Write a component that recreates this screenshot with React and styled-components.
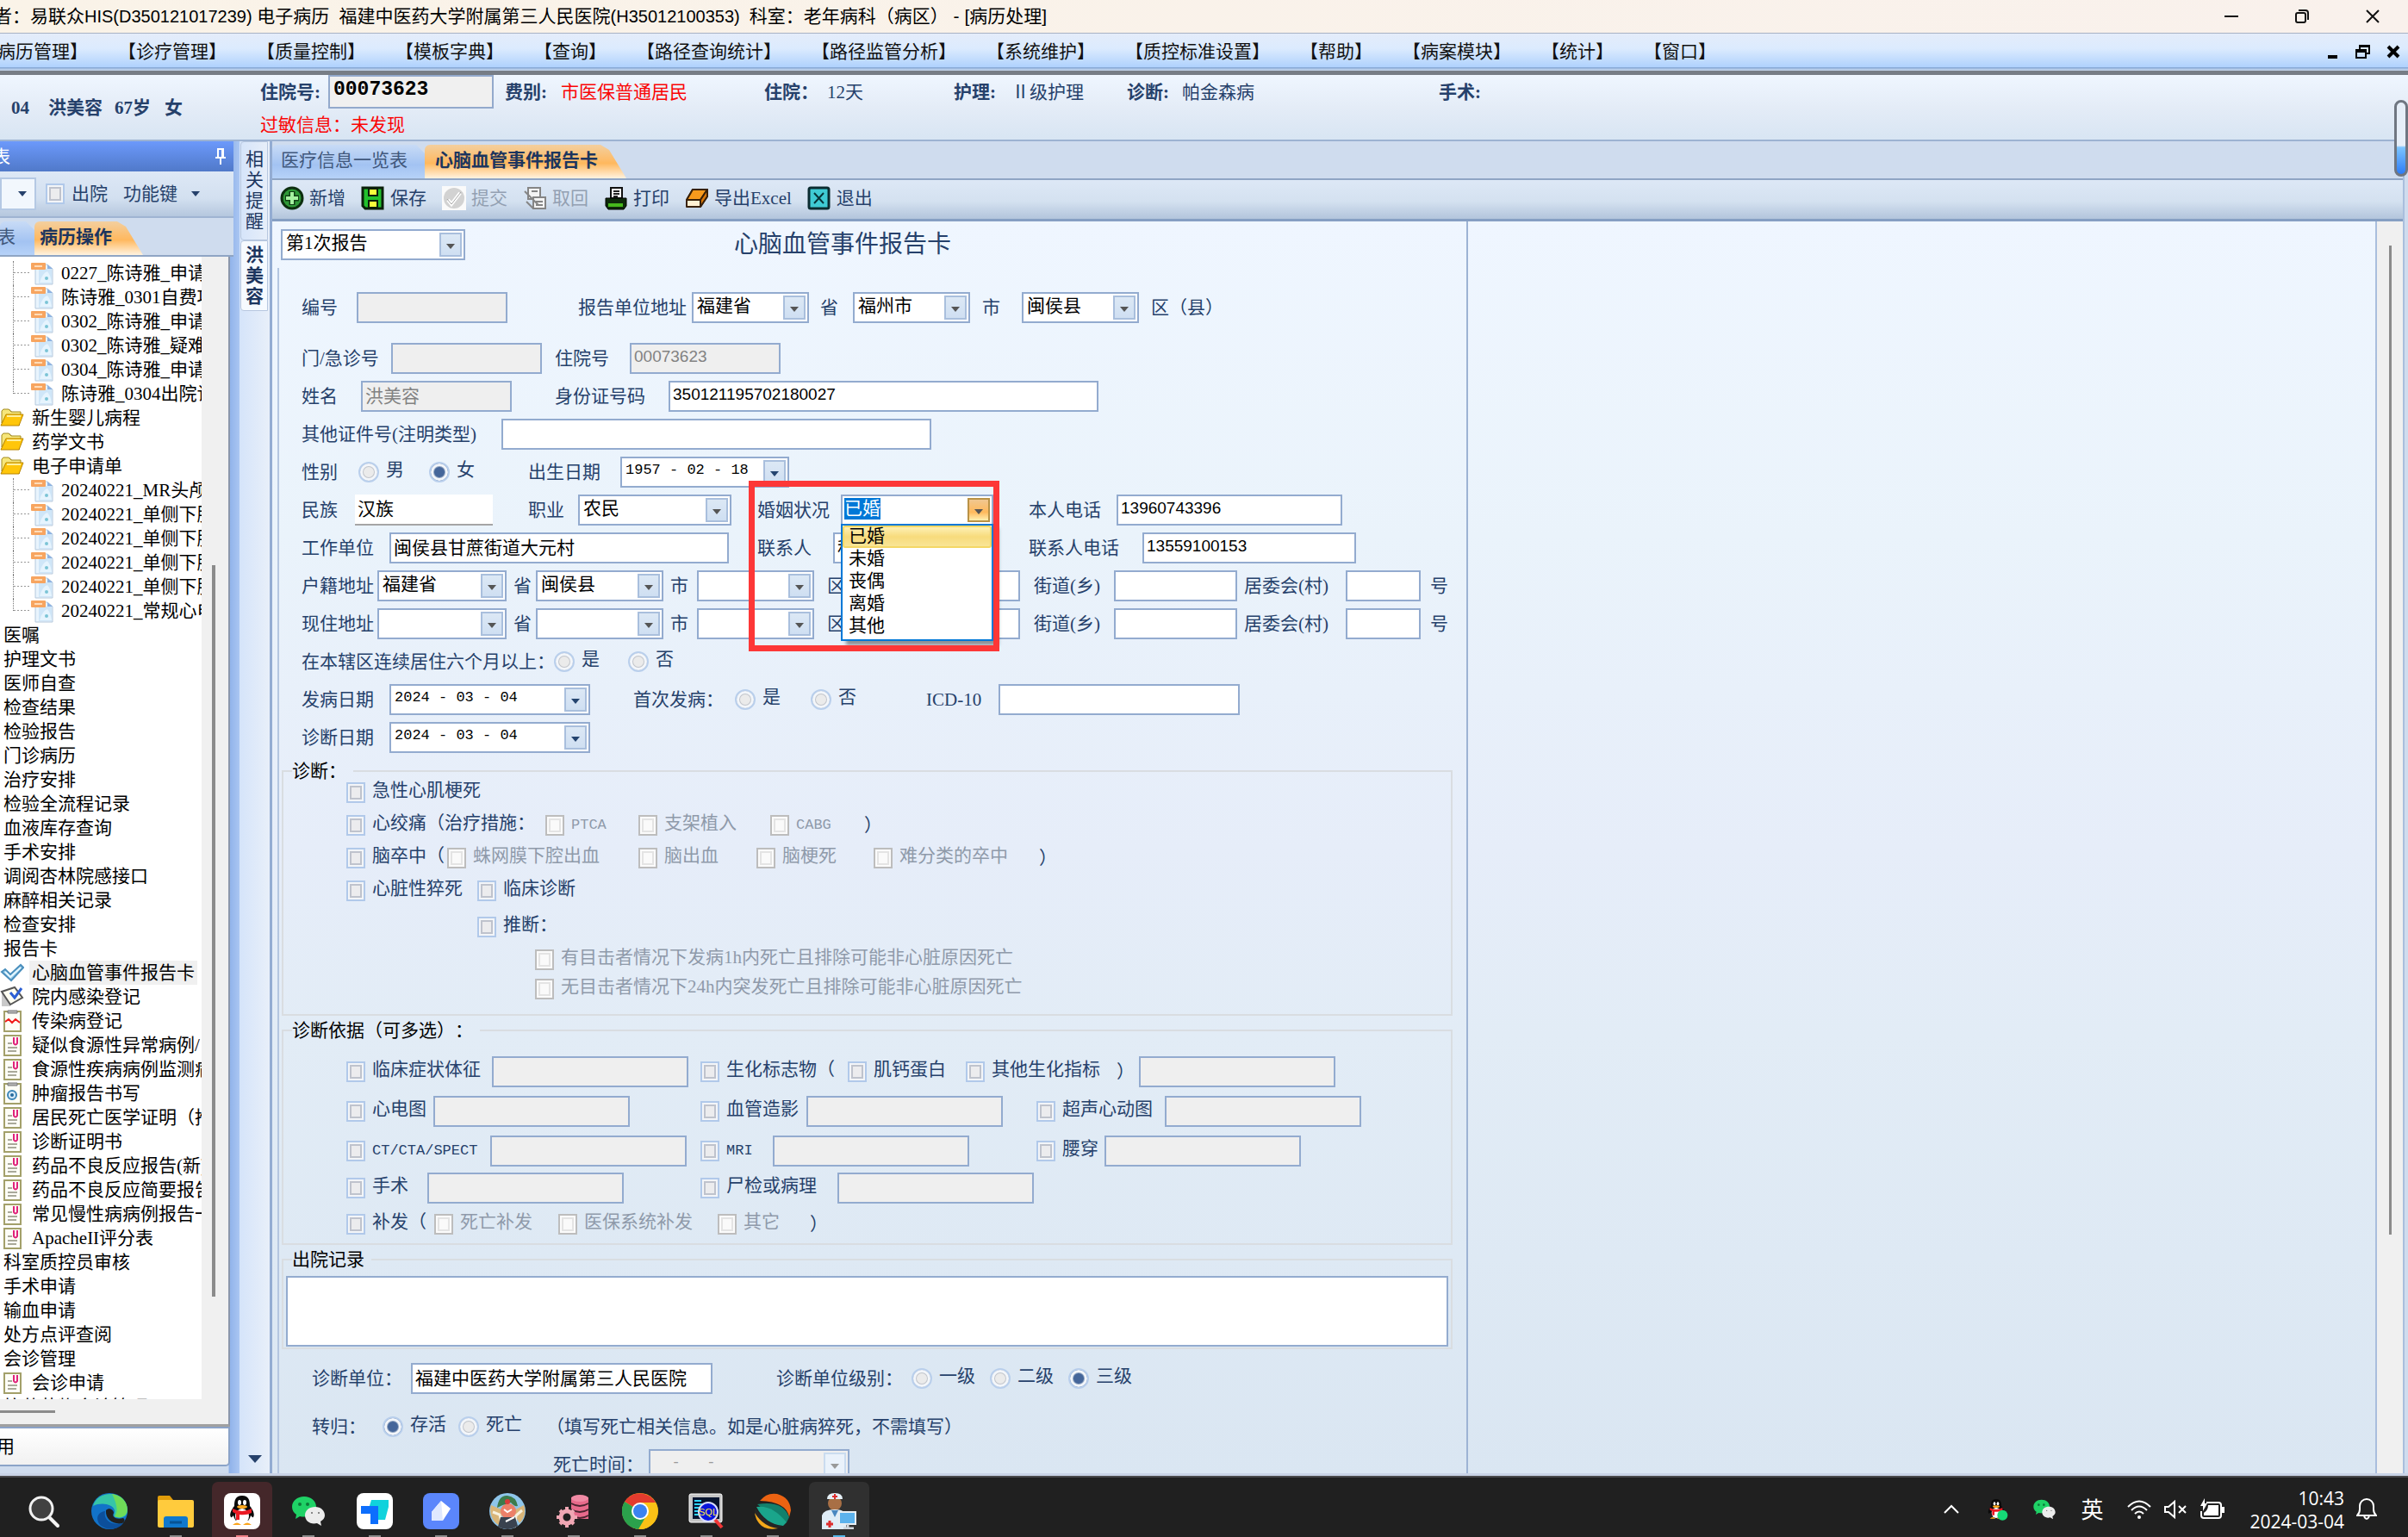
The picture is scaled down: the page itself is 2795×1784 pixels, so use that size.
import React from "react";
import styled, { createGlobalStyle, css } from "styled-components";

const TREE = [
  ["doc", "0227_陈诗雅_申请单"],
  ["doc", "陈诗雅_0301自费项目"],
  ["doc", "0302_陈诗雅_申请单"],
  ["doc", "0302_陈诗雅_疑难病例"],
  ["doc", "0304_陈诗雅_申请单"],
  ["docEnd", "陈诗雅_0304出院记录"],
  ["folder", "新生婴儿病程"],
  ["folder", "药学文书"],
  ["folder", "电子申请单"],
  ["doc", "20240221_MR头颅平扫"],
  ["doc", "20240221_单侧下肢"],
  ["doc", "20240221_单侧下肢"],
  ["doc", "20240221_单侧下肢"],
  ["doc", "20240221_单侧下肢"],
  ["docEnd", "20240221_常规心电图"],
  ["text", "医嘱"],
  ["text", "护理文书"],
  ["text", "医师自查"],
  ["text", "检查结果"],
  ["text", "检验报告"],
  ["text", "门诊病历"],
  ["text", "治疗安排"],
  ["text", "检验全流程记录"],
  ["text", "血液库存查询"],
  ["text", "手术安排"],
  ["text", "调阅杏林院感接口"],
  ["text", "麻醉相关记录"],
  ["text", "检查安排"],
  ["text", "报告卡"],
  ["check", "心脑血管事件报告卡"],
  ["note", "院内感染登记"],
  ["chart", "传染病登记"],
  ["clip", "疑似食源性异常病例/"],
  ["clip", "食源性疾病病例监测病"],
  ["scan", "肿瘤报告书写"],
  ["clip", "居民死亡医学证明（推"],
  ["clip", "诊断证明书"],
  ["clip", "药品不良反应报告(新)"],
  ["clip", "药品不良反应简要报告"],
  ["clip", "常见慢性病病例报告一"],
  ["clip", "ApacheII评分表"],
  ["text", "科室质控员审核"],
  ["text", "手术申请"],
  ["text", "输血申请"],
  ["text", "处方点评查阅"],
  ["text", "会诊管理"],
  ["clip", "会诊申请"],
  ["text", "抗菌药物会诊管理"],
];

const MENUS = [
  "【病历管理】", "【诊疗管理】", "【质量控制】", "【模板字典】", "【查询】", "【路径查询统计】", "【路径监管分析】",
  "【系统维护】", "【质控标准设置】", "【帮助】", "【病案模块】", "【统计】", "【窗口】",
];

const TOOLS = [
  ["add", "新增"],
  ["save", "保存"],
  ["submit", "提交", true],
  ["recall", "取回", true],
  ["print", "打印"],
  ["export", "导出Excel"],
  ["exit", "退出"],
];

const TreeIcon = ({ kind }) => {
  if (kind === "folder") {
    return (
      <svg width="28" height="26" viewBox="0 0 28 26">
        <path d="M3 22V5q0-2 2-2h6l3 3h9v16z" fill="#8f8752" />
        <path d="M2 19V5l2-2h6l3 3h11v5H8z" fill="#f6e67a" stroke="#a28a1c" />
        <path d="M1 22 7 9h20l-5 13z" fill="#ffc60a" stroke="#b98500" />
        <path d="M8 11h16" stroke="#fff0a0" strokeWidth="2" />
      </svg>
    );
  }
  if (kind === "doc" || kind === "docEnd") {
    return (
      <svg width="26" height="28" viewBox="0 0 26 28">
        <path d="M5 4h14l6 5v18H5z" fill="#e9f4fd" stroke="#b4c8dc" />
        <path d="M9 9h15v17H9z" fill="#cfe6f8" />
        <path d="M10 25q3-11 9-13 4 5 5 13z" fill="#e6f4fe" />
        <circle cx="18" cy="20" r="2" fill="#7cc4d6" />
        <path d="M19 4v5h6z" fill="#8db2e2" />
        <rect x="0" y="2" width="17" height="8" rx="1" fill="#f7a560" />
        <path d="M4 6h9" stroke="#ffdcb8" strokeWidth="2" />
      </svg>
    );
  }
  if (kind === "check") {
    return (
      <svg width="28" height="26" viewBox="0 0 28 26">
        <path d="m2 12 4-3 6 6L24 4l3 3-14 15z" fill="#9cd0ec" stroke="#4b8fbd" strokeWidth="2" />
        <path d="m6 12 6 6L24 7" fill="none" stroke="#e4f6ff" strokeWidth="2" />
      </svg>
    );
  }
  if (kind === "note") {
    return (
      <svg width="28" height="28" viewBox="0 0 28 28">
        <path d="M2 10h10v15H2z" fill="#c9c9c9" />
        <path d="m2 8 15-5 9 12-14 8z" fill="#fffef2" stroke="#555" strokeWidth="2" />
        <path d="m12 9 5 6 8-11" fill="none" stroke="#2c5fd4" strokeWidth="3" />
      </svg>
    );
  }
  return (
    <svg width="28" height="28" viewBox="0 0 28 28">
      <rect x="5" y="3" width="19" height="23" fill="#fdfdf6" stroke="#a3a06a" strokeWidth="2" />
      {kind === "clip" && <path d="M9 12h5M9 17h11M9 21h10" stroke="#a9a99a" strokeWidth="2" />}
      {kind === "clip" && <path d="M16 5v7q2 3 4 0V5" fill="none" stroke="#e0227b" strokeWidth="2" />}
      {kind !== "clip" && <path d="M9 5h11V2H9z" fill="#b5b5b5" stroke="#777" />}
      {kind === "chart" && <path d="m6 15 4-3 4 4 4-4 5 4" fill="none" stroke="#f01919" strokeWidth="2" />}
      {kind === "scan" && <circle cx="14" cy="16" r="5" fill="#d8ebf8" stroke="#3d86b8" strokeWidth="2" />}
      {kind === "scan" && <circle cx="14" cy="16" r="2" fill="#246a9c" />}
    </svg>
  );
};

const ToolIcon = ({ kind }) => (
  <svg width="28" height="28" viewBox="0 0 28 28">
    {kind === "add" && (
      <g>
        <circle cx="14" cy="14" r="12" fill="#2f9a38" stroke="#0d2f10" strokeWidth="3" />
        <path d="M14 6v16M6 14h16" stroke="#103d14" strokeWidth="7" />
        <path d="M14 7v14M7 14h14" stroke="#a5f2a0" strokeWidth="4" />
      </g>
    )}
    {kind === "save" && (
      <g>
        <path d="M2 2h23v24H5l-3-3z" fill="#22c02c" stroke="#0a1f0a" strokeWidth="3" />
        <path d="M9 3h10v8H9zM9 17h10v8H9z" fill="#f6ff3c" stroke="#0a1f0a" strokeWidth="2" />
      </g>
    )}
    {kind === "submit" && (
      <g>
        <rect width="28" height="28" fill="#fafafa" />
        <circle cx="14" cy="14" r="12" fill="#d2d2d2" />
        <path d="m7 16 4 5 10-13" fill="none" stroke="#fff" strokeWidth="4" />
        <path d="m6 15 5 6 11-14" fill="none" stroke="#a8a8a8" />
      </g>
    )}
    {kind === "recall" && (
      <g fill="#f4f4f4" stroke="#858585" strokeWidth="2">
        <path d="M6 2h14v13H6z" />
        <path d="M12 13h14v13H12z" />
        <path d="m2 6 16 16M4 18l8 8M15 18h8M15 22h8M10 6h7" />
      </g>
    )}
    {kind === "print" && (
      <g>
        <path d="M8 2h13v12H8z" fill="#fff" stroke="#111" strokeWidth="2" />
        <path d="M11 6h7M11 9h7M11 12h5" stroke="#222" strokeWidth="2" />
        <path d="M2 14h24v9l-3 4H5l-3-4z" fill="#0e2a0b" stroke="#000" />
        <path d="M5 20h17v4H5z" fill="#46b81c" />
      </g>
    )}
    {kind === "export" && (
      <g stroke="#38210a" strokeWidth="2" strokeLinejoin="round">
        <path d="M9 4h17v8l-8 12H2v-8z" fill="#fff0d2" />
        <path d="M9 4h17l-8 12H2z" fill="#f89a1c" />
        <path d="m18 16 8-12v8l-8 12z" fill="#d97708" />
      </g>
    )}
    {kind === "exit" && (
      <g>
        <rect x="2" y="2" width="23" height="24" rx="2" fill="#3fcbd4" stroke="#0b2c30" strokeWidth="3" />
        <path d="m8 8 11 12M19 8 8 20" stroke="#08353a" strokeWidth="2" />
      </g>
    )}
  </svg>
);

const Penguin = () => (
  <g>
    <path d="M21 3c-8 0-9 6-9 12-4 5-6 10-4 13 1 1 3-2 3-2 1 4 3 6 3 6h14s2-2 3-6c0 0 2 3 3 2 2-3 0-8-4-13 0-6-1-12-9-12z" fill="#0a0a0a" />
    <ellipse cx="21" cy="27" rx="8" ry="9" fill="#fff" />
    <ellipse cx="18" cy="11" rx="2" ry="3" fill="#fff" />
    <ellipse cx="24" cy="11" rx="2" ry="3" fill="#fff" />
    <ellipse cx="21" cy="16" rx="6" ry="2" fill="#fba61c" />
    <path d="M10 18q11 6 22 0v5q-6 3-14 2v6h-4v-7l-4-2z" fill="#eb1923" />
    <path d="M10 37q5-5 10 0zM22 37q5-5 10 0z" fill="#fba61c" />
  </g>
);

const WeChat = () => (
  <g>
    <path d="M16 4C8 4 2 9 2 16c0 4 2 7 5 9l-1 5 5-3c9 2 19-2 19-11C30 9 24 4 16 4z" fill="#1fd266" />
    <circle cx="11" cy="13" r="2" fill="#0c7a3a" />
    <circle cx="20" cy="13" r="2" fill="#0c7a3a" />
    <path d="M29 16c-7 0-12 4-12 10s6 11 14 9l5 3-1-5c3-2 5-4 5-7 0-6-5-10-11-10z" fill="#ececec" />
    <circle cx="25" cy="23" r="1" fill="#666" />
    <circle cx="33" cy="23" r="1" fill="#666" />
  </g>
);

const DOCK = [
  ["搜索", <g key="a"><circle cx="19" cy="18" r="13" fill="#414141" stroke="#f2f2f2" strokeWidth="3" /><path d="m29 29 9 9" stroke="#f2f2f2" strokeWidth="4" strokeLinecap="round" /></g>],
  ["Edge", <g key="b"><circle cx="21" cy="21" r="21" fill="#1273c9" /><path d="M2 15C7-5 42-4 42 20c0 8-8 10-14 8-4-2 0-4-1-8-2-7-15-10-25-5z" fill="#36c5a8" /><path d="M24 1c14 2 20 14 17 22-3 6-11 6-14 4 5-6 2-16-3-26z" fill="#6fdc58" /><path d="M16 21c-2 9 5 17 21 14-6 8-19 9-27 2-6-8-2-15 6-16z" fill="#0c4f9b" /><path d="M17 20c4-4 9 0 9 3-3 5 3 8 11 6 3 2 1 5-1 6-10 2-20-4-19-15z" fill="#202020" /></g>],
  ["文件资源管理器", <g key="c"><path d="M0 5q0-2 2-2h12l4 5v8H0z" fill="#e09c0a" /><rect y="8" width="42" height="32" rx="2" fill="#ffcb3d" /><path d="M7 40V30q0-3 3-3h22q3 0 3 3v10z" fill="#0f78cd" /><path d="M14 34h14" stroke="#075394" strokeWidth="3" /></g>],
  ["QQ", <g key="d"><rect width="42" height="42" rx="8" fill="#fff" /><Penguin /></g>],
  ["微信", <WeChat key="e" />],
  ["ToDesk", <g key="f"><rect width="42" height="42" rx="8" fill="#fff" /><path d="M17 8h20v8l-4 15h-8V18H14z" fill="#10d2dc" /><path d="M5 15h20v21h-9V24H5z" fill="#0d6efd" /></g>],
  ["笔记", <g key="g"><rect width="42" height="42" rx="8" fill="#5b86fb" /><path d="m21 9 11 9-9 14H10V22z" fill="#fff" /><path d="m21 9 2 23H10V22z" fill="#dfe8ff" /></g>],
  ["头像", <g key="h"><circle cx="21" cy="21" r="21" fill="#8ec5ea" /><path d="M2 14 16 20l-4 18A21 21 0 0 1 2 14zM40 14l-13 7 8 14a21 21 0 0 0 5-21z" fill="#d9b578" /><path d="M4 22l8 3 3 15M38 20l-7 6-2 14" fill="none" stroke="#f7f1df" strokeWidth="3" /><circle cx="22" cy="21" r="9" fill="#ec8069" /><path d="M9 17Q11 2 21 3t12 12q-4 1-8-4-8 2-16 6z" fill="#3c7b4c" /><circle cx="21" cy="10" r="3" fill="#d93a3a" /><path d="M13 28h17l3 10a21 21 0 0 1-23 1z" fill="#39424f" /><path d="m17 19 4 3 5-3M19 33l10-5" stroke="#fff" strokeWidth="2" fill="none" /></g>],
  ["数据库", <g key="i"><path d="M18 5h20v25H18z" fill="#e76a8b" /><ellipse cx="28" cy="6" rx="10" ry="4" fill="#f08aa4" /><path d="M18 12q10 6 20 0M18 19q10 6 20 0M18 26q10 6 20 0" stroke="#4b2430" strokeWidth="2" fill="none" /><circle cx="13" cy="28" r="7" fill="#202020" stroke="#f0a7b4" strokeWidth="5" /><path d="M13 16v5M13 35v5M1 28h5M20 28h5M5 20l3 3M18 33l3 3M5 36l3-3M18 23l3-3" stroke="#f0a7b4" strokeWidth="4" /></g>],
  ["Chrome", <g key="j"><circle cx="21" cy="21" r="21" fill="#fbc116" /><path d="M21 21 3 10a21 21 0 0 1 36 1H21z" fill="#e33b2e" /><path d="M21 21 3 10a21 21 0 0 0 16 32l10-17z" fill="#2ba24c" /><path d="M21 11h18A21 21 0 0 1 20 42l10-16z" fill="#fbc116" /><circle cx="21" cy="21" r="10" fill="#fff" /><circle cx="21" cy="21" r="8" fill="#3b82f0" /></g>],
  ["SQL", <g key="k"><rect x="1" y="1" width="38" height="33" rx="2" fill="#c4c4c4" stroke="#fff" /><rect x="5" y="5" width="31" height="25" fill="#07142f" /><path d="M7 9h8M7 13h11M7 17h7M7 21h6M7 25h8" stroke="#2fd4ff" strokeWidth="2" /><circle cx="23" cy="22" r="11" fill="#0916dd" stroke="#d8dcff" strokeWidth="2" /><text x="12" y="26" fontSize="11" fontFamily="Liberation Sans" fill="#ffe93b">SQL</text><path d="m31 31 8 9" stroke="#f13636" strokeWidth="4" /></g>],
  ["Navicat", <g key="l"><path d="M6 9Q14-1 26 1q15 4 16 19l-2 8Q37 10 6 9z" fill="#ec6312" /><path d="M3 13q30-5 37 15l-3 6Q24 31 3 13z" fill="#12806c" /><path d="M2 16q18-3 35 18l-4 4Q12 36 2 16z" fill="#1aa58b" /><path d="M1 18q14 20 31 20l-5 3Q6 38 0 22z" fill="#262626" /><path d="M0 23q10 16 27 18Q12 44 5 35 1 30 0 23z" fill="#f4a81a" /></g>],
  ["医生站", <g key="m"><circle cx="16" cy="12" r="8" fill="#a86f45" /><path d="M7 7q0-7 9-7t9 7z" fill="#e6f1f8" /><path d="M16 1v6M13 4h6" stroke="#dc2d2d" strokeWidth="2" /><path d="M1 42V26q2-7 15-7t13 9v14z" fill="#dfedf7" /><path d="m12 20 4 8 4-8" fill="#4a88c0" /><path d="M10 32v8M6 36h8" stroke="#dc2d2d" strokeWidth="3" /><rect x="21" y="22" width="19" height="14" fill="#5bb2ec" stroke="#e8eef2" strokeWidth="2" /><path d="M26 41h12M31 36v5" stroke="#cfd6dc" strokeWidth="3" /></g>],
];

const Text = ({ w, off, value = "", label, num }) => (
  <Field $w={w} $off={off} $num={num} disabled={off} defaultValue={value} aria-label={label} />
);

const Select = ({ w, value = "", label }) => (
  <Combo $w={w}>
    <select aria-label={label} defaultValue={value}>
      <option>{value}</option>
    </select>
    <Arrow />
  </Combo>
);

const DateBox = ({ w, value, label, off }) => (
  <Combo $w={w} $off={off}>
    <input aria-label={label} defaultValue={value} disabled={off} />
    <DropButton aria-label={`选择${label}`} $off={off}>
      <Triangle />
    </DropButton>
  </Combo>
);

const Arrow = ({ hot }) => (
  <ArrowBox $hot={hot}>
    <Triangle />
  </ArrowBox>
);

const Triangle = () => (
  <svg width="10" height="6" viewBox="0 0 10 6">
    <path d="M0 0h10L5 6z" fill="currentColor" />
  </svg>
);

const Check = ({ children, off, code }) => (
  <Choice $off={off} $code={code}>
    <CheckInput type="checkbox" disabled={off} />
    <span>{children}</span>
  </Choice>
);

const Radio = ({ children, name, on }) => (
  <Choice>
    <RadioInput type="radio" name={name} defaultChecked={on} />
    <span>{children}</span>
  </Choice>
);

const AddressRow = ({ label, province, city }) => (
  <Row $cols="88px 158px 26px 156px 31px 151px 30px 210px 93px 151px 118px 98px auto">
    <span>{label}</span>
    <Select w={150} value={province} label={`${label}省`} />
    <span>省</span>
    <Select w={148} value={city} label={`${label}市`} />
    <span>市</span>
    <Select w={136} label={`${label}区`} />
    <span>区</span>
    <Text w={194} label={`${label}区县`} />
    <span>街道(乡)</span>
    <Text w={143} label={`${label}街道`} />
    <span>居委会(村)</span>
    <Text w={87} label={`${label}居委会`} />
    <span>号</span>
  </Row>
);

const ReportForm = () => (
  <Form>
    <Row $h={54} $indent={4} $cols="526px auto">
      <Select w={214} value="第1次报告" label="报告次数" />
      <FormTitle>心脑血管事件报告卡</FormTitle>
    </Row>
    <FormBody>
      <FirstRow $cols="64px 257px 132px 149px 38px 150px 46px 150px auto">
        <span>编号</span>
        <Text w={175} off label="编号" />
        <span>报告单位地址</span>
        <Select w={136} value="福建省" label="报告单位省" />
        <span>省</span>
        <Select w={136} value="福州市" label="报告单位市" />
        <span>市</span>
        <Select w={136} value="闽侯县" label="报告单位区县" />
        <span>区（县）</span>
      </FirstRow>
      <Row $cols="104px 190px 87px auto">
        <span>门/急诊号</span>
        <Text w={175} off label="门/急诊号" />
        <span>住院号</span>
        <Text w={175} off num value="00073623" label="住院号" />
      </Row>
      <Row $cols="69px 225px 132px auto">
        <span>姓名</span>
        <Text w={175} off value="洪美容" label="姓名" />
        <span>身份证号码</span>
        <Text w={499} num value="350121195702180027" label="身份证号码" />
      </Row>
      <Row $cols="232px auto">
        <span>其他证件号(注明类型)</span>
        <Text w={499} label="其他证件号" />
      </Row>
      <Row $cols="66px 82px 115px 107px auto">
        <span>性别</span>
        <Radio name="sex">男</Radio>
        <Radio name="sex" on>女</Radio>
        <span>出生日期</span>
        <DateBox w={196} value="1957 - 02 - 18" label="出生日期" />
      </Row>
      <Row $cols="62px 201px 58px 208px 97px 218px 102px auto">
        <span>民族</span>
        <PlainField defaultValue="汉族" aria-label="民族" />
        <span>职业</span>
        <Select w={178} value="农民" label="职业" />
        <span>婚姻状况</span>
        <MaritalBox>
          <Combo $w={177}>
            <MaritalValue role="combobox" aria-expanded="true" aria-controls="marital" aria-label="婚姻状况" tabIndex={0}>
              <mark>已婚</mark>
            </MaritalValue>
            <Arrow hot />
          </Combo>
          <DropList id="marital" role="listbox">
            {["已婚", "未婚", "丧偶", "离婚", "其他"].map((name, i) => (
              <DropItem key={name} role="option" aria-selected={i === 0} $active={i === 0}>{name}</DropItem>
            ))}
          </DropList>
          <Highlight />
        </MaritalBox>
        <span>本人电话</span>
        <Text w={262} num value="13960743396" label="本人电话" />
      </Row>
      <Row $cols="102px 427px 88px 227px 132px auto">
        <span>工作单位</span>
        <Text w={394} value="闽侯县甘蔗街道大元村" label="工作单位" />
        <span>联系人</span>
        <Text w={178} value="程" label="联系人" />
        <span>联系人电话</span>
        <Text w={248} num value="13559100153" label="联系人电话" />
      </Row>
      <AddressRow label="户籍地址" province="福建省" city="闽侯县" />
      <AddressRow label="现住地址" />
      <Row $cols="293px 86px auto">
        <span>在本辖区连续居住六个月以上：</span>
        <Radio name="live">是</Radio>
        <Radio name="live">否</Radio>
      </Row>
      <Row $cols="102px 283px 118px 88px 134px 84px auto">
        <span>发病日期</span>
        <DateBox w={233} value="2024 - 03 - 04" label="发病日期" />
        <span>首次发病：</span>
        <Radio name="first">是</Radio>
        <Radio name="first">否</Radio>
        <span>ICD-10</span>
        <Text w={280} label="ICD-10" />
      </Row>
      <Row $cols="102px auto">
        <span>诊断日期</span>
        <DateBox w={233} value="2024 - 03 - 04" label="诊断日期" />
      </Row>

      <Group>
        <legend>诊断：</legend>
        <Row $h={38} $indent={73}>
          <Check>急性心肌梗死</Check>
        </Row>
        <Row $h={38} $indent={73} $cols="231px 108px 153px 109px auto">
          <Check>心绞痛（治疗措施：</Check>
          <Check off code>PTCA</Check>
          <Check off>支架植入</Check>
          <Check off code>CABG</Check>
          <span>）</span>
        </Row>
        <Row $h={38} $indent={73} $cols="117px 222px 137px 136px 192px auto">
          <Check>脑卒中（</Check>
          <Check off>蛛网膜下腔出血</Check>
          <Check off>脑出血</Check>
          <Check off>脑梗死</Check>
          <Check off>难分类的卒中</Check>
          <span>）</span>
        </Row>
        <Row $h={38} $indent={73} $cols="152px auto">
          <Check>心脏性猝死</Check>
          <Check>临床诊断</Check>
        </Row>
        <Row $h={46} $indent={225}>
          <Check>推断：</Check>
        </Row>
        <Row $h={20} $indent={292}>
          <Check off>有目击者情况下发病1h内死亡且排除可能非心脏原因死亡</Check>
        </Row>
        <Row $h={58} $indent={292}>
          <Check off>无目击者情况下24h内突发死亡且排除可能非心脏原因死亡</Check>
        </Row>
      </Group>

      <Group $loose>
        <legend>诊断依据（可多选）：</legend>
        <Row $h={46} $indent={73} $cols="169px 242px 171px 137px 175px 26px auto">
          <Check>临床症状体征</Check>
          <Text w={228} off label="临床症状体征" />
          <Check>生化标志物（</Check>
          <Check>肌钙蛋白</Check>
          <Check>其他生化指标</Check>
          <span>）</span>
          <Text w={228} off label="生化标志物" />
        </Row>
        <Row $h={46} $indent={73} $cols="101px 310px 123px 267px 149px auto">
          <Check>心电图</Check>
          <Text w={228} off label="心电图" />
          <Check>血管造影</Check>
          <Text w={228} off label="血管造影" />
          <Check>超声心动图</Check>
          <Text w={228} off label="超声心动图" />
        </Row>
        <Row $h={46} $indent={73} $cols="167px 244px 84px 306px 79px auto">
          <Check code>CT/CTA/SPECT</Check>
          <Text w={228} off label="CT/CTA/SPECT" />
          <Check code>MRI</Check>
          <Text w={228} off label="MRI" />
          <Check>腰穿</Check>
          <Text w={228} off label="腰穿" />
        </Row>
        <Row $h={40} $indent={73} $cols="94px 317px 159px auto">
          <Check>手术</Check>
          <Text w={228} off label="手术" />
          <Check>尸检或病理</Check>
          <Text w={228} off label="尸检或病理" />
        </Row>
        <Row $indent={73} $cols="102px 144px 185px 107px auto">
          <Check>补发（</Check>
          <Check off>死亡补发</Check>
          <Check off>医保系统补发</Check>
          <Check off>其它</Check>
          <span>）</span>
        </Row>
      </Group>

      <Group>
        <legend>出院记录</legend>
        <Memo aria-label="出院记录" />
      </Group>

      <Row $h={68} $indent={38} $cols="115px 424px 157px 91px 91px auto">
        <span>诊断单位：</span>
        <Text w={350} value="福建中医药大学附属第三人民医院" label="诊断单位" />
        <span>诊断单位级别：</span>
        <Radio name="level">一级</Radio>
        <Radio name="level">二级</Radio>
        <Radio name="level" on>三级</Radio>
      </Row>
      <Row $indent={38} $cols="82px 88px 102px auto">
        <span>转归：</span>
        <Radio name="outcome" on>存活</Radio>
        <Radio name="outcome">死亡</Radio>
        <span>（填写死亡相关信息。如是心脏病猝死，不需填写）</span>
      </Row>
      <Row $indent={318} $cols="111px auto">
        <span>死亡时间：</span>
        <DateBox w={233} value="  -   -" label="死亡时间" off />
      </Row>
    </FormBody>
  </Form>
);

const Sidebar = () => (
  <Side>
    <SideTitle>
      <span>表</span>
      <svg width="14" height="20" viewBox="0 0 14 20">
        <path d="M4 1h6v10H4zM1 11h12M7 11v8M9 1v10" fill="none" stroke="#fff" strokeWidth="2" />
      </svg>
    </SideTitle>
    <SideTools>
      <SideCombo aria-label="病区"><Triangle /></SideCombo>
      <Choice>
        <CheckInput type="checkbox" />
        <span>出院</span>
      </Choice>
      <KeyButton>功能键 <Triangle /></KeyButton>
    </SideTools>
    <TabStrip>
      <Tab $w={40} $edge><span>表</span></Tab>
      <Tab $active $w={126}><span>病历操作</span></Tab>
    </TabStrip>
    <TreeFrame>
      <TreeList>
        {TREE.map(([kind, name], i) => (
          <TreeRow key={i} $kind={kind}>
            {kind !== "text" && <TreeIcon kind={kind} />}
            <TreeName $selected={kind === "check"}>{name}</TreeName>
          </TreeRow>
        ))}
      </TreeList>
      <Thumb />
      <HTrack><HThumb /></HTrack>
    </TreeFrame>
    <SideFoot><span>用</span></SideFoot>
  </Side>
);

const App = () => (
  <Window>
    <GlobalStyle />
    <TitleBar>
      <TitleText>
        者：易联众<Latin>HIS(D350121017239) </Latin>电子病历 <Latin> </Latin>福建中医药大学附属第三人民医院<Latin>(H35012100353)  </Latin>
        科室：老年病科（病区） - [病历处理]
      </TitleText>
      <WindowButtons>
        <button aria-label="最小化"><svg width="16" height="16"><path d="M0 8h16" stroke="#111" strokeWidth="2" /></svg></button>
        <button aria-label="还原"><svg width="16" height="16" fill="none" stroke="#111" strokeWidth="2"><rect x="1" y="4" width="11" height="11" rx="2" /><path d="M4 1h8q3 0 3 3v8" /></svg></button>
        <button aria-label="关闭"><svg width="16" height="16" stroke="#111" strokeWidth="2"><path d="m1 1 14 14M15 1 1 15" /></svg></button>
      </WindowButtons>
    </TitleBar>
    <MenuBar>
      <MenuItems>
        {MENUS.map((name) => <MenuButton key={name}>{name}</MenuButton>)}
      </MenuItems>
      <ChildButtons>
        <button aria-label="最小化子窗口"><svg width="16" height="18"><path d="M2 15h11" stroke="#000" strokeWidth="4" /></svg></button>
        <button aria-label="还原子窗口"><svg width="18" height="18" fill="none" stroke="#000" strokeWidth="2"><path d="M5 7V2h11v9h-4M5 3h11M1 7h11v9H1zM1 9h11" /></svg></button>
        <button aria-label="关闭子窗口"><svg width="16" height="18" stroke="#000" strokeWidth="4"><path d="m2 3 12 12M14 3 2 15" /></svg></button>
      </ChildButtons>
    </MenuBar>
    <Patient>
      <PatientName>
        <span>04</span>
        <span>洪美容</span>
        <span>67岁</span>
        <span>女</span>
      </PatientName>
      <PatientInfo>
        <PatientRow>
          <b>住院号:</b>
          <AdmissionNo defaultValue="00073623" aria-label="住院号" readOnly />
          <b>费别:</b>
          <Alert>市医保普通居民</Alert>
          <b>住院：</b>
          <span>12天</span>
          <b>护理:</b>
          <span>Ⅱ级护理</span>
          <b>诊断:</b>
          <span>帕金森病</span>
          <b>手术:</b>
        </PatientRow>
        <Alert>过敏信息：未发现</Alert>
      </PatientInfo>
    </Patient>
    <Workspace>
      <Sidebar />
      <Rail>
        <RailTab>相关提醒</RailTab>
        <RailTab $active>洪美容</RailTab>
        <RailMore aria-label="更多">
          <svg width="16" height="9" viewBox="0 0 16 9"><path d="M0 0h16L8 9z" fill="currentColor" /></svg>
        </RailMore>
      </Rail>
      <Main>
        <TabStrip>
          <Tab $w={177}><span>医疗信息一览表</span></Tab>
          <Tab $active $wide $w={234}><span>心脑血管事件报告卡</span></Tab>
        </TabStrip>
        <Toolbar>
          {TOOLS.map(([kind, name, off]) => (
            <ToolButton key={kind} disabled={off}>
              <ToolIcon kind={kind} />
              {name}
            </ToolButton>
          ))}
        </Toolbar>
        <Page>
          <ReportForm />
          <PageTrack><PageThumb /></PageTrack>
        </Page>
      </Main>
      <EdgeGauge />
    </Workspace>
    <Taskbar>
      <Dock>
        {DOCK.map(([name, art], i) => (
          <DockButton key={name} aria-label={name} $alert={i === 3} $active={i === 12} $running={i > 1}>
            <svg width="42" height="42" viewBox="0 0 42 42">{art}</svg>
          </DockButton>
        ))}
      </Dock>
      <Tray>
        <svg width="20" height="12" viewBox="0 0 20 12"><path d="m2 10 8-8 8 8" fill="none" stroke="#fff" strokeWidth="2" /></svg>
        <svg width="28" height="28" viewBox="0 0 42 42"><Penguin /><circle cx="32" cy="31" r="9" fill="#16d977" /></svg>
        <svg width="28" height="28" viewBox="0 0 42 42"><WeChat /></svg>
        <TrayText>英</TrayText>
        <TrayGroup>
          <svg width="28" height="24" viewBox="0 0 28 24" fill="none" stroke="#fff" strokeWidth="2"><path d="M1 9q13-13 26 0M5 13q9-9 18 0M9 17q5-5 10 0" /><circle cx="14" cy="21" r="1" fill="#fff" /></svg>
          <svg width="28" height="24" viewBox="0 0 28 24" fill="none" stroke="#fff" strokeWidth="2"><path d="M2 9h4l7-6v18l-7-6H2zM18 8l8 8M26 8l-8 8" /></svg>
          <svg width="30" height="26" viewBox="0 0 30 26"><path d="M8 5h14q3 0 3 3v12q0 3-3 3H5q-3 0-3-3v-5" fill="none" stroke="#fff" strokeWidth="2" /><path d="M10 8h12v12H5v-3q5-3 5-9zM26 10h3v7h-3zM6 0 1 9h3v6l5-9H6z" fill="#fff" /></svg>
        </TrayGroup>
        <TrayGroup>
          <Clock>
            <span>10:43</span>
            <span>2024-03-04</span>
          </Clock>
          <svg width="24" height="28" viewBox="0 0 24 28" fill="none" stroke="#fff" strokeWidth="2"><path d="M1 21q3-3 3-7v-4a8 8 0 0 1 16 0v4q0 4 3 7zM9 22q3 6 6 0" /></svg>
        </TrayGroup>
      </Tray>
    </Taskbar>
  </Window>
);

export default App;

const GlobalStyle = createGlobalStyle`
  * {
    box-sizing: border-box;
  }
  body {
    margin: 0;
    overflow: hidden;
    color: #26416b;
    font: 21px/24px "Liberation Serif", "Noto Sans CJK SC", serif;
    text-spacing-trim: space-all;
  }
  button, input, select, textarea {
    margin: 0;
    padding: 0;
    border: 0;
    border-radius: 0;
    background: none;
    color: inherit;
    font: inherit;
    text-spacing-trim: space-all;
  }
  svg {
    display: block;
    flex: none;
  }
`;

const Window = styled.div`
  display: flex;
  flex-direction: column;
  height: 100vh;
  overflow: hidden;
  background: #cfdcee;
  white-space: nowrap;
`;

const TitleBar = styled.header`
  display: flex;
  justify-content: space-between;
  align-items: center;
  height: 39px;
  flex: none;
  border-bottom: 1px solid #a9b2c4;
  background: linear-gradient(90deg, #faf3e8, #f9f1ec);
`;

const TitleText = styled.div`
  display: flex;
  margin-left: -7px;
  color: #000;
  font-family: "Liberation Sans", "Noto Sans CJK SC", sans-serif;
  white-space: pre;
`;

const Latin = styled.span`
  font-size: 20px;
`;

const WindowButtons = styled.div`
  display: flex;

  button {
    display: grid;
    place-items: center;
    width: 82px;
    height: 36px;
  }
`;

const MenuBar = styled.nav`
  display: flex;
  justify-content: space-between;
  align-items: center;
  height: 48px;
  flex: none;
  padding-bottom: 2px;
  border-bottom: 5px solid #777d86;
  background: linear-gradient(#e4ecfa, #dcebfe 40%, #b0d2fd 90%, #83a6d6 91%, #cddcf0);
`;

const MenuItems = styled.div`
  display: flex;
  gap: 35px;
  margin-left: -24px;
`;

const MenuButton = styled.button`
  color: #111;
`;

const ChildButtons = styled.div`
  display: flex;
  gap: 18px;
  padding-right: 9px;
`;

const Patient = styled.section`
  display: grid;
  grid-template-columns: 302px 1fr;
  height: 77px;
  flex: none;
  border-bottom: 2px solid #9db3d2;
  background: linear-gradient(#eff6ff, #e4ecf7 50%, #d8e5f3);
`;

const PatientName = styled.div`
  display: grid;
  grid-template-columns: 43px 77px 58px auto;
  align-items: center;
  padding-left: 13px;
  font-weight: bold;
`;

const PatientInfo = styled.div`
  display: flex;
  flex-direction: column;
  gap: 7px;
`;

const PatientRow = styled.div`
  display: grid;
  grid-template-columns: 79px 205px 65px 236px 73px 147px 67px 134px 64px 298px auto;
  align-items: center;
`;

const AdmissionNo = styled.input`
  width: 192px;
  height: 39px;
  padding: 0 0 5px 4px;
  border: 2px solid #93a9cc;
  background: #f0f0f0;
  color: #000;
  font: bold 23px/24px "Liberation Mono", monospace;
`;

const Alert = styled.span`
  color: #fa0505;
`;

const Workspace = styled.div`
  position: relative;
  display: grid;
  grid-template-columns: 278px 38px 1fr;
  flex: 1;
  min-height: 0;
  padding-right: 4px;
  border-bottom: 3px solid #c9d3e6;
`;

const Side = styled.aside`
  display: flex;
  flex-direction: column;
  min-height: 0;
  padding-right: 7px;
  background: linear-gradient(90deg, #cfdcee 265px, #8fb2ea 266px, #aac6f2);
`;

const SideTitle = styled.div`
  display: flex;
  justify-content: space-between;
  align-items: center;
  height: 35px;
  flex: none;
  padding-right: 8px;
  background: linear-gradient(#6c99fb, #5079c9);
  color: #fff;

  span {
    margin-left: -9px;
  }
`;

const SideTools = styled.div`
  display: flex;
  align-items: center;
  height: 54px;
  flex: none;
  border-bottom: 2px solid #9fb4d2;
  background: linear-gradient(#dde8f6, #d3e0f0 60%, #b5c7de);

  label {
    margin: 0 18px 0 11px;
  }

  label span {
    padding: 0;
  }
`;

const SideCombo = styled.button`
  display: flex;
  justify-content: flex-end;
  align-items: center;
  width: 42px;
  height: 38px;
  padding-right: 9px;
  border: 2px solid #b5c9e4;
  background: #f2f7fd;
`;

const KeyButton = styled.button`
  display: flex;
  align-items: center;
  gap: 16px;
`;

const TabStrip = styled.div`
  display: flex;
  align-items: flex-end;
  height: 45px;
  flex: none;
  border-bottom: 2px solid #8fa5c4;
  background: #cfdcee;
`;

const Tab = styled.button`
  width: ${(p) => p.$w}px;
  height: 39px;
  padding: 0 0 4px ${(p) => (p.$edge ? 0 : 10)}px;
  border-radius: 6px 0 0 0;
  clip-path: polygon(0 0, calc(100% - 10px) 0, 100% 10px, 100% 100%, 0 100%);
  background: linear-gradient(#c8dbf6, #a3c3f2 60%, #b6d2f8);
  color: #41587c;
  text-align: left;

  span {
    margin-left: ${(p) => (p.$edge ? -3 : 0)}px;
  }

  ${(p) => p.$active && css`
    padding-left: ${p.$wide ? 12 : 6}px;
    clip-path: polygon(0 0, calc(100% - 30px) 0, calc(100% - 20px) 6px, 100% 100%, 0 100%);
    background: linear-gradient(#f3cf9f, #ffb85e 55%, #fff3e0);
    color: #1c355e;
    font-weight: bold;
  `}
`;

const TreeFrame = styled.div`
  display: grid;
  grid-template: minmax(0, 1fr) 29px / minmax(0, 1fr) 31px;
  flex: 1;
  min-height: 0;
  margin-right: 4px;
  border-right: 2px solid #8b96aa;
  border-bottom: 3px solid #a0a0a0;
  background: #f0f0f0;
`;

const TreeList = styled.ul`
  margin: 0;
  padding: 5px 0 0;
  overflow: hidden;
  list-style: none;
  background: #fff;
  color: #000;
`;

const TreeRow = styled.li`
  display: flex;
  align-items: center;
  height: 28px;
  padding-left: ${(p) => (p.$kind === "text" ? 4 : 0)}px;

  ${(p) => p.$kind.startsWith("doc") && css`
    &::before {
      content: "";
      flex: none;
      align-self: flex-start;
      width: 20px;
      height: ${p.$kind === "doc" ? 28 : 14}px;
      margin: 0 0 0 15px;
      border-left: 1px dotted #777;
      background: repeating-linear-gradient(90deg, #999 0 2px, transparent 2px 4px) 0 13px / 20px 1px no-repeat;
    }
  `}
`;

const TreeName = styled.span`
  margin-left: 6px;
  padding: 2px 3px;
  background: ${(p) => (p.$selected ? "#f0f0f0" : "none")};

  ${TreeRow} > &:first-child {
    margin: 0;
    padding: 0;
  }
`;

const Thumb = styled.div`
  width: 4px;
  height: 64%;
  margin: 358px auto 0 12px;
  background: #8b8b8b;
`;

const HTrack = styled.div`
  display: flex;
  align-items: center;
`;

const HThumb = styled.div`
  width: 64px;
  height: 3px;
  background: #8b8b8b;
`;

const SideFoot = styled.div`
  display: flex;
  align-items: center;
  height: 46px;
  flex: none;
  margin: 0 4px 8px 0;
  border: 2px solid #8ba3c8;
  border-left: 0;
  border-radius: 0 0 5px 0;
  background: linear-gradient(#fff, #f1f1f1);
  color: #000;

  span {
    margin-left: -4px;
  }
`;

const Rail = styled.div`
  display: flex;
  flex-direction: column;
  align-items: flex-end;
  padding-right: 2px;
  border-right: 3px solid #93acd2;
  background: linear-gradient(90deg, #d5e4fa, #e8eff9);
`;

const RailTab = styled.button`
  width: 32px;
  padding: 8px 5px 9px;
  border: 1px solid #b7c7df;
  border-radius: 4px 0 0 4px;
  white-space: normal;
  color: #1c355e;

  ${(p) => p.$active && css`
    padding: 4px 5px;
    background: #f6faff;
    font-weight: bold;
  `}
`;

const RailMore = styled.button`
  margin: auto 7px 12px 0;
`;

const Main = styled.main`
  display: flex;
  flex-direction: column;
  min-width: 0;
  min-height: 0;
  border-right: 2px solid #a9bedd;
`;

const Toolbar = styled.div`
  display: flex;
  align-items: center;
  gap: 18px;
  height: 48px;
  flex: none;
  padding: 0 9px 4px;
  border-bottom: 3px solid #869fc3;
  background: linear-gradient(#dde8f6, #d4e1f0 55%, #b3c5dc);
`;

const ToolButton = styled.button`
  display: flex;
  align-items: center;
  gap: 6px;

  &:disabled {
    color: #93a0b2;
  }
`;

const Page = styled.div`
  display: grid;
  grid-template-columns: minmax(0, 1fr) 32px;
  flex: 1;
  min-height: 0;
  overflow: hidden;
  padding-left: 6px;
  background: linear-gradient(#eff6ff, #eaf3fb 25%, #e6edf9 50%, #e2ecf6 65%, #dae6f2);
`;

const Form = styled.form`
  max-width: 1382px;
  min-height: 0;
  overflow: hidden;
  border-right: 2px solid #9db3d4;
`;

const FormBody = styled.div`
  padding-top: 24px;
  border-left: 2px solid #b4c6e0;
`;

const Row = styled.div`
  display: grid;
  grid-template-columns: ${(p) => p.$cols || "auto"};
  align-items: center;
  justify-content: start;
  height: ${(p) => p.$h || 44}px;
  padding-left: ${(p) => p.$indent || 26}px;
`;

const FirstRow = styled(Row)`
  margin-bottom: 15px;
`;

const FormTitle = styled.h1`
  margin: 0;
  font-size: 28px;
  line-height: 32px;
  font-weight: normal;
`;

const Field = styled.input`
  width: ${(p) => p.$w}px;
  height: 36px;
  padding: 0 3px 4px;
  border: 2px solid #93abcf;
  background: ${(p) => (p.$off ? "#efefef" : "#fff")};
  color: ${(p) => (p.$off ? "#828282" : "#000")};

  ${(p) => p.$num && css`
    font-family: "Liberation Sans", sans-serif;
    font-size: 19px;
  `}
`;

const PlainField = styled.input`
  width: 160px;
  height: 36px;
  padding: 0 3px 4px;
  border-bottom: 2px solid #a5a5a5;
  background: #fff;
  color: #000;
`;

const Combo = styled.div`
  display: flex;
  width: ${(p) => p.$w}px;
  height: 36px;
  padding: 2px;
  border: 2px solid #93abcf;
  background: ${(p) => (p.$off ? "#efefef" : "#fff")};
  color: #000;

  select, input {
    flex: 1;
    min-width: 0;
    padding: 0 0 4px 2px;
    appearance: none;
    outline: none;
  }

  input {
    font: 17px/24px "Liberation Mono", monospace;
    white-space: pre;
  }

  input:disabled {
    color: #9a9a9a;
  }
`;

const arrowStyle = css`
  display: grid;
  place-items: center;
  width: 26px;
  flex: none;
  padding-top: 4px;
  border: 2px solid #a9bfdd;
  background: linear-gradient(#dce8f5, #cfdff2);
  color: #555;
`;

const ArrowBox = styled.span`
  ${arrowStyle}
  pointer-events: none;

  ${(p) => p.$hot && css`
    border-color: #b99246;
    background: linear-gradient(#f0c790, #ffb95c 60%, #fff0b0);
  `}
`;

const DropButton = styled.button.attrs({ type: "button" })`
  ${arrowStyle}
  color: #24446f;

  ${(p) => p.$off && css`
    border-color: #cadcf0;
    background: #eaf2fb;
    color: #999;
  `}
`;

const MaritalBox = styled.div`
  position: relative;
`;

const MaritalValue = styled.div`
  flex: 1;

  mark {
    display: inline-block;
    height: 25px;
    background: #0078d7;
    color: #fff;
  }
`;

const DropList = styled.div`
  position: absolute;
  top: 34px;
  left: 0;
  z-index: 2;
  width: 177px;
  padding-bottom: 2px;
  border: 2px solid #0078d7;
  background: #fff;
  box-shadow: 6px 5px 4px rgba(0, 0, 0, 0.4);
`;

const DropItem = styled.div`
  height: 26px;
  padding-left: 7px;
  color: #000;
  line-height: 24px;

  ${(p) => p.$active && css`
    border: 2px solid #f4d766;
    border-radius: 3px;
    background: linear-gradient(#fdf0b4, #f7db7c 50%, #f9e596);
    padding-left: 5px;
    line-height: 20px;
  `}
`;

const Highlight = styled.div`
  position: absolute;
  top: -16px;
  left: -107px;
  z-index: 3;
  width: 291px;
  height: 198px;
  border: 7px solid #fd3737;
  pointer-events: none;
`;

const Choice = styled.label`
  display: flex;
  align-items: center;
  gap: 8px;
  color: ${(p) => (p.$off ? "#8f9aaa" : "inherit")};

  span {
    padding-bottom: 6px;
  }

  ${(p) => p.$code && css`
    span {
      padding: 0;
      font-family: "Liberation Mono", monospace;
      font-size: 17px;
    }
  `}
`;

const CheckInput = styled.input`
  width: 22px;
  height: 24px;
  flex: none;
  appearance: none;
  border: 2px solid #b1c9ea;
  background: #ececee;
  box-shadow: inset 0 0 0 2px #f3f5f8, inset 0 0 0 4px #bfc3cd;

  &:disabled {
    border-color: #bdbdbd;
    background: #fafafa;
    box-shadow: inset 0 0 0 2px #fbfbfb, inset 0 0 0 4px #e4e4e4;
  }
`;

const RadioInput = styled.input`
  width: 24px;
  height: 24px;
  flex: none;
  appearance: none;
  border: 2px solid #b9cfec;
  border-radius: 50%;
  background: #ebebeb;
  box-shadow: inset 0 0 0 3px #f3f6fa, inset 0 0 0 4px #c2c5cb;

  &:checked {
    background: #45669a;
    box-shadow: inset 0 0 0 3px #f3f6fa, inset 0 0 0 4px #8fa3c0;
  }
`;

const Group = styled.fieldset`
  min-width: 0;
  margin: 5px 16px 0 3px;
  padding: ${(p) => (p.$loose ? "13px 0 0" : "0")};
  border: 2px solid #d9dde1;

  legend {
    margin-left: 10px;
    padding: 0 8px 0 0;
    color: #000;
  }

  legend + ${Row} {
    margin-top: ${(p) => (p.$loose ? 0 : -6)}px;
  }
`;

const Memo = styled.textarea`
  display: block;
  width: calc(100% - 6px);
  height: 82px;
  margin: 7px 3px 1px;
  border: 2px solid #93abcf;
  background: #fff;
  resize: none;
`;

const PageTrack = styled.div`
  grid-column: 2;
  border-left: 2px solid #a9bedd;
  background: #f0f0f0;
`;

const PageThumb = styled.div`
  width: 3px;
  height: 79%;
  margin: 28px auto 0;
  background: #8b8b8b;
`;

const EdgeGauge = styled.div`
  position: absolute;
  top: -48px;
  right: 0;
  width: 16px;
  height: 89px;
  border: 3px solid #6f7681;
  border-radius: 8px;
  background: linear-gradient(#e6eef8 50px, #7cc4ff 52px, #2d7cf6);
`;

const Taskbar = styled.footer`
  display: flex;
  justify-content: space-between;
  height: 71px;
  flex: none;
  border-top: 2px solid #48484a;
  background: #202020;
`;

const Dock = styled.div`
  display: flex;
  gap: 7px;
  padding: 5px 0 0 15px;
`;

const DockButton = styled.button`
  display: grid;
  place-items: center;
  width: 70px;
  height: 64px;
  padding-top: 5px;
  border-radius: 7px 7px 0 0;
  background: ${(p) => (p.$alert ? "#44272a" : p.$active ? "#303030" : "none")};
  border-bottom: 2px solid transparent;

  ${(p) => p.$running && css`
    border-image: linear-gradient(90deg, transparent 40%, ${p.$active ? "#57b6e8" : p.$alert ? "#ef7f86" : "#8b8b8b"} 40% 60%, transparent 60%) 1;
    border-width: 0 0 2px;
    border-style: solid;
  `}
`;

const Tray = styled.div`
  display: flex;
  align-items: center;
  gap: 28px;
  padding: 5px 36px 0 0;
  color: #fff;
  font-family: "Open Sans", "Noto Sans CJK SC", sans-serif;
`;

const TrayText = styled.span`
  font-size: 26px;
`;

const TrayGroup = styled.div`
  display: flex;
  align-items: center;
  gap: 14px;
`;

const Clock = styled.time`
  display: flex;
  flex-direction: column;
  gap: 3px;
  text-align: right;
`;
